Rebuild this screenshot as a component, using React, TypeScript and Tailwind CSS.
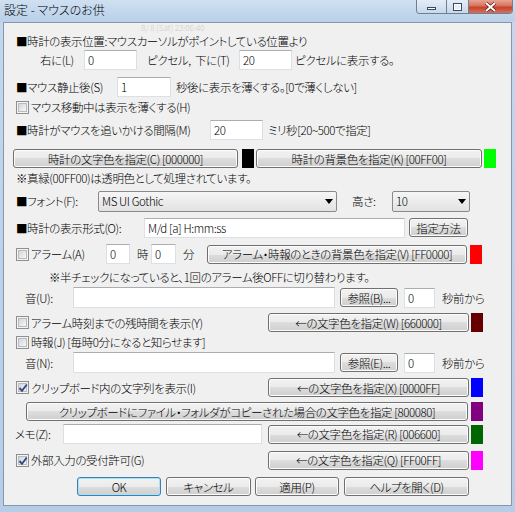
import type { ReactNode } from 'react';

function Label({ className = '', children }: { className?: string; children: ReactNode }) {
    return <span className={`shrink-0 whitespace-nowrap ${className}`}>{children}</span>;
}

function TextBox({ className = '', value = '' }: { className?: string; value?: string }) {
    return (
        <div
            className={`flex h-[20px] shrink-0 items-center border border-[#dbdfe6] border-t-[#abadb3] bg-white pl-[3px] ${className}`}
        >
            {value}
        </div>
    );
}

function Button({
    className = '',
    children,
    isDefault = false,
}: {
    className?: string;
    children: ReactNode;
    isDefault?: boolean;
}) {
    const edge = isDefault
        ? 'border-[#3c7fb1] shadow-[inset_0_0_0_1px_#a8e2f8]'
        : 'border-[#707070] shadow-[inset_0_0_0_1px_#fcfcfc]';

    return (
        <div
            className={`flex h-[19px] shrink-0 items-center justify-center whitespace-nowrap rounded-[3px] border bg-[linear-gradient(to_bottom,#f2f2f2_0%,#ebebeb_50%,#dddddd_50%,#cfcfcf_100%)] ${edge} ${className}`}
        >
            {children}
        </div>
    );
}

function Swatch({ className = '' }: { className?: string }) {
    return <div className={`h-[19px] w-[12px] shrink-0 ${className}`} />;
}

function Check({ checked = false }: { checked?: boolean }) {
    return (
        <div className="relative flex h-[13px] w-[13px] shrink-0 items-center justify-center border border-[#8e8f8f] bg-[#f4f4f4]">
            <div className="h-[9px] w-[9px] border border-[#b8bcc2] bg-[linear-gradient(135deg,#d4d6d9,#f7f7f7)]" />
            {checked && (
                <svg className="absolute left-[1px] top-[1px]" width="10" height="10" viewBox="0 0 10 10">
                    <path d="M1.5 5 L4 7.8 L8.8 1.5" fill="none" stroke="#34488a" strokeWidth="1.9" />
                </svg>
            )}
        </div>
    );
}

function Combo({ className = '', value }: { className?: string; value: string }) {
    return (
        <div
            className={`flex h-[21px] shrink-0 items-center justify-between rounded-[2px] border border-[#8a8a8a] bg-[linear-gradient(to_bottom,#f6f6f6_0%,#ececec_50%,#e2e2e2_100%)] pl-[3px] pr-[3px] ${className}`}
        >
            <span>{value}</span>
            <svg width="8" height="5" viewBox="0 0 8 5">
                <path d="M0 0H8L4 5Z" fill="#000" />
            </svg>
        </div>
    );
}

function TitleBar() {
    return (
        <div className="flex h-[22px] items-start justify-between bg-[linear-gradient(to_bottom,#cfe0f1_0%,#c1d6ec_60%,#b9d0e8_100%)]">
            <span className="ml-[4px] mt-[2px] text-[12px] leading-[16px] tracking-normal text-black">設定 - マウスのお供</span>
            <div className="mr-[2px] flex h-[14px] overflow-hidden rounded-b-[4px] border border-t-0 border-[#6f7f91]">
                <div className="flex w-[29px] items-end justify-center bg-[linear-gradient(to_bottom,#e3edf7,#c7d8ea)] pb-[3px]">
                    <div className="h-[3px] w-[9px] border border-[#3a4a5c] bg-white" />
                </div>
                <div className="flex w-[22px] items-center justify-center border-l border-[#6f7f91] bg-[linear-gradient(to_bottom,#e3edf7,#c7d8ea)]">
                    <div className="h-[8px] w-[9px] border border-[#3a4a5c] bg-[#e6eef6] shadow-[inset_0_0_0_1px_#ffffff]" />
                </div>
                <div className="flex w-[44px] items-center justify-center border-l border-[#6f7f91] bg-[linear-gradient(to_bottom,#e8a493_0%,#d8735d_45%,#c4422b_55%,#d6705a_100%)]">
                    <svg width="13" height="10" viewBox="0 0 13 10">
                        <path d="M2 1 L11 9 M11 1 L2 9" stroke="#5a1a10" strokeWidth="3.4" />
                        <path d="M2 1 L11 9 M11 1 L2 9" stroke="#ffffff" strokeWidth="2" />
                    </svg>
                </div>
            </div>
        </div>
    );
}

export default function App() {
    return (
        <div className="flex h-[512px] w-[515px] flex-col overflow-hidden bg-[linear-gradient(to_bottom,#c3d8ee,#b5cde7)] font-['Noto_Sans_CJK_JP','Noto_Sans',sans-serif] text-[11.5px] font-light leading-[16px] tracking-[-0.4px] text-black [font-feature-settings:'palt']">
            <TitleBar />

            <div className="relative ml-[3px] flex h-[484px] w-[509px] flex-col border border-[#8796a8] bg-[#f0f0f0]">
                <span className="absolute left-[137px] top-[1px] text-[8px] leading-[8px] tracking-normal text-[#cccccc]">
                    8/ 8 [Sat] 23:06:40
                </span>

                <div className="mt-[12px] flex h-[12px] items-center pl-[12px] leading-[12px]">
                    <Label>■時計の表示位置:マウスカーソルがポイントしている位置より</Label>
                </div>

                <div className="mt-[3px] flex h-[20px] items-center pl-[36px]">
                    <Label className="w-[44px]">右に(L)</Label>
                    <TextBox className="w-[53px]" value="0" />
                    <Label className="ml-[10px] w-[92px]">ピクセル,&nbsp;&nbsp;下に(T)</Label>
                    <TextBox className="w-[53px]" value="20" />
                    <Label className="ml-[3px]">ピクセルに表示する。</Label>
                </div>

                <div className="mt-[7px] flex h-[20px] items-center pl-[12px]">
                    <Label className="w-[101px]">■マウス静止後(S)</Label>
                    <TextBox className="w-[54px]" value="1" />
                    <Label className="ml-[5px]">秒後に表示を薄くする。[0で薄くしない]</Label>
                </div>

                <div className="mt-[2px] flex h-[16px] items-center pl-[12px]">
                    <Check />
                    <Label className="ml-[2px]">マウス移動中は表示を薄くする(H)</Label>
                </div>

                <div className="mt-[5px] flex h-[20px] items-center pl-[12px]">
                    <Label className="w-[194px]">■時計がマウスを追いかける間隔(M)</Label>
                    <TextBox className="w-[53px]" value="20" />
                    <Label className="ml-[5px]">ミリ秒[20~500で指定]</Label>
                </div>

                <div className="mt-[9px] flex h-[19px] items-center pl-[9px]">
                    <Button className="w-[225px]">時計の文字色を指定(C) [000000]</Button>
                    <Swatch className="ml-[4px] bg-black" />
                    <Button className="ml-[2px] w-[226px]">時計の背景色を指定(K) [00FF00]</Button>
                    <Swatch className="ml-[2px] bg-[#00ff00]" />
                </div>

                <div className="mt-[2px] flex h-[16px] items-center pl-[12px]">
                    <Label>※真緑(00FF00)は透明色として処理されています。</Label>
                </div>

                <div className="mt-[4px] flex h-[22px] items-center pl-[12px]">
                    <Label className="w-[82px]">■フォント(F):</Label>
                    <Combo className="w-[239px]" value="MS UI Gothic" />
                    <Label className="ml-[15px] w-[40px]">高さ:</Label>
                    <Combo className="w-[78px]" value="10" />
                </div>

                <div className="mt-[5px] flex h-[21px] items-center pl-[12px]">
                    <Label className="w-[128px]">■時計の表示形式(O):</Label>
                    <TextBox className="w-[261px]" value="M/d [a] H:mm:ss" />
                    <Button className="ml-[4px] w-[59px]">指定方法</Button>
                </div>

                <div className="mt-[6px] flex h-[20px] items-center pl-[12px]">
                    <Check />
                    <Label className="ml-[2px] w-[75px]">アラーム(A)</Label>
                    <TextBox className="w-[24px]" value="0" />
                    <Label className="ml-[7px] w-[14px]">時</Label>
                    <TextBox className="w-[25px]" value="0" />
                    <Label className="ml-[7px] w-[24px]">分</Label>
                    <Button className="w-[260px]">アラーム・時報のときの背景色を指定(V) [FF0000]</Button>
                    <Swatch className="ml-[3px] bg-[#ff0000]" />
                </div>

                <div className="mt-[5px] flex h-[16px] items-center pl-[45px]">
                    <Label>※半チェックになっていると、1回のアラーム後OFFに切り替わります。</Label>
                </div>

                <div className="mt-[2px] flex h-[21px] items-center pl-[21px]">
                    <Label className="w-[48px]">音(U):</Label>
                    <TextBox className="h-[21px] w-[262px]" />
                    <Button className="ml-[5px] w-[58px]">参照(B)...</Button>
                    <TextBox className="ml-[6px] w-[31px]" value="0" />
                    <Label className="ml-[7px]">秒前から</Label>
                </div>

                <div className="mt-[5px] flex h-[19px] items-center pl-[12px]">
                    <div className="flex w-[252px] items-center">
                        <Check />
                        <Label className="ml-[2px]">アラーム時刻までの残時間を表示(Y)</Label>
                    </div>
                    <Button className="w-[201px]">←の文字色を指定(W) [660000]</Button>
                    <Swatch className="ml-[2px] bg-[#660000]" />
                </div>

                <div className="mt-[2px] flex h-[16px] items-center pl-[12px]">
                    <Check />
                    <Label className="ml-[2px]">時報(J) [毎時0分になると知らせます]</Label>
                </div>

                <div className="mt-[2px] flex h-[21px] items-center pl-[21px]">
                    <Label className="w-[48px]">音(N):</Label>
                    <TextBox className="h-[21px] w-[262px]" />
                    <Button className="ml-[5px] w-[58px]">参照(E)...</Button>
                    <TextBox className="ml-[6px] w-[31px]" value="0" />
                    <Label className="ml-[7px]">秒前から</Label>
                </div>

                <div className="mt-[5px] flex h-[19px] items-center pl-[12px]">
                    <div className="flex w-[252px] items-center">
                        <Check checked />
                        <Label className="ml-[2px]">クリップボード内の文字列を表示(I)</Label>
                    </div>
                    <Button className="w-[201px]">←の文字色を指定(X) [0000FF]</Button>
                    <Swatch className="ml-[2px] bg-[#0000ff]" />
                </div>

                <div className="mt-[5px] flex h-[19px] items-center pl-[22px]">
                    <Button className="w-[442px]">クリップボードにファイル・フォルダがコピーされた場合の文字色を指定 [800080]</Button>
                    <Swatch className="ml-[3px] bg-[#800080]" />
                </div>

                <div className="mt-[3px] flex h-[20px] items-center pl-[11px]">
                    <Label className="w-[48px]">メモ(Z):</Label>
                    <TextBox className="w-[199px]" />
                    <Button className="ml-[6px] w-[201px]">←の文字色を指定(R) [006600]</Button>
                    <Swatch className="ml-[2px] bg-[#006600]" />
                </div>

                <div className="mt-[7px] flex h-[18px] items-center pl-[12px]">
                    <div className="flex w-[252px] items-center">
                        <Check checked />
                        <Label className="ml-[2px]">外部入力の受付許可(G)</Label>
                    </div>
                    <Button className="h-[18px] w-[201px]">←の文字色を指定(Q) [FF00FF]</Button>
                    <Swatch className="ml-[2px] bg-[#ff00ff]" />
                </div>

                <div className="mt-[8px] flex h-[19px] items-center pl-[73px]">
                    <Button className="w-[84px]" isDefault>
                        OK
                    </Button>
                    <Button className="ml-[5px] w-[85px]">キャンセル</Button>
                    <Button className="ml-[4px] w-[84px]">適用(P)</Button>
                    <Button className="ml-[5px] w-[125px]">ヘルプを開く(D)</Button>
                </div>
            </div>
        </div>
    );
}
